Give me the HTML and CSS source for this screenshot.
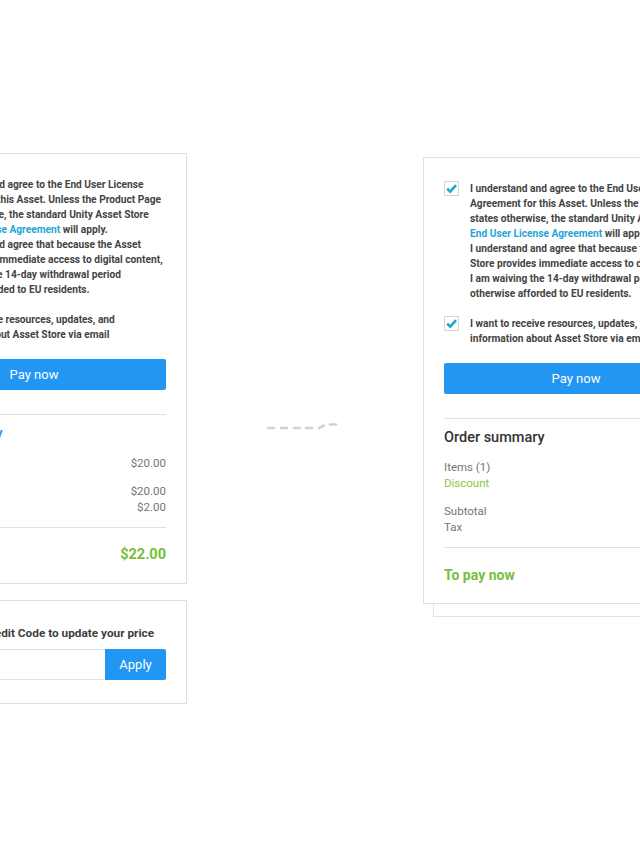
FILE: index.html
```html
<!DOCTYPE html>
<html>
<head>
<meta charset="utf-8">
<link rel="stylesheet" href="styles.css">
</head>
<body>
<div class="stage">
  <div class="col col-left">
    <div class="card">
      <div class="check-row">
        <span class="box"><svg viewBox="0 0 15 15" width="15" height="15"><path d="M3.2 7.6 L6.2 10.6 L12 4.2" fill="none" stroke="#1ea6d6" stroke-width="2.6"/></svg></span>
        <p class="legal">I understand and agree to the End User License<br>Agreement for this Asset. Unless the Product Page<br>states otherwise, the standard Unity Asset Store<br><span class="link">End User License Agreement</span> will apply.<br>I understand and agree that because the Asset<br>Store provides immediate access to digital content,<br>I am waiving the 14-day withdrawal period<br>otherwise afforded to EU residents.</p>
      </div>
      <div class="check-row second">
        <span class="box"><svg viewBox="0 0 15 15" width="15" height="15"><path d="M3.2 7.6 L6.2 10.6 L12 4.2" fill="none" stroke="#1ea6d6" stroke-width="2.6"/></svg></span>
        <p class="legal">I want to receive resources, updates, and<br>information about Asset Store via email</p>
      </div>
      <button class="pay">Pay now</button>
      <hr class="rule">
      <h2 class="summary-title blue">Order summary</h2>
      <div class="line"><span>Items (1)</span><span>$20.00</span></div>
      <div class="line gap"><span>Subtotal</span><span>$20.00</span></div>
      <div class="line"><span>Tax</span><span>$2.00</span></div>
      <hr class="rule">
      <div class="total"><span>To pay now</span><span>$22.00</span></div>
    </div>
    <div class="card credit">
      <p class="credit-title">Use Coupon or Credit Code to update your price</p>
      <div class="credit-form">
        <span class="field"></span>
        <button class="apply">Apply</button>
      </div>
    </div>
  </div>

  <div class="col col-mid">
    <svg class="arrow" width="72" height="10" viewBox="0 0 72 10">
      <g stroke="#d2d2d2" stroke-width="2.6" stroke-linecap="round" fill="none">
        <line x1="2" y1="7" x2="8" y2="7"/>
        <line x1="15" y1="7" x2="21" y2="7"/>
        <line x1="28" y1="7" x2="34" y2="7"/>
        <line x1="40" y1="7" x2="46" y2="7"/>
        <line x1="53" y1="7" x2="58" y2="4.5"/>
        <line x1="64" y1="3.5" x2="70" y2="3.5"/>
      </g>
    </svg>
  </div>

  <div class="col col-right">
    <div class="stack">
      <div class="card">
        <div class="check-row">
          <span class="box"><svg viewBox="0 0 15 15" width="15" height="15"><path d="M3.2 7.6 L6.2 10.6 L12 4.2" fill="none" stroke="#1ea6d6" stroke-width="2.6"/></svg></span>
          <p class="legal">I understand and agree to the End User License<br>Agreement for this Asset. Unless the Product Page<br>states otherwise, the standard Unity Asset Store<br><span class="link">End User License Agreement</span> will apply.<br>I understand and agree that because the Asset<br>Store provides immediate access to digital content,<br>I am waiving the 14-day withdrawal period<br>otherwise afforded to EU residents.</p>
        </div>
        <div class="check-row second">
          <span class="box"><svg viewBox="0 0 15 15" width="15" height="15"><path d="M3.2 7.6 L6.2 10.6 L12 4.2" fill="none" stroke="#1ea6d6" stroke-width="2.6"/></svg></span>
          <p class="legal">I want to receive resources, updates, and<br>information about Asset Store via email</p>
        </div>
        <button class="pay">Pay now</button>
        <hr class="rule">
        <h2 class="summary-title">Order summary</h2>
        <div class="line"><span>Items (1)</span><span>$20.00</span></div>
        <div class="line discount"><span>Discount</span><span>-$2.00</span></div>
        <div class="line gap"><span>Subtotal</span><span>$18.00</span></div>
        <div class="line"><span>Tax</span><span>$1.80</span></div>
        <hr class="rule">
        <div class="total"><span>To pay now</span><span>$19.80</span></div>
      </div>
    </div>
  </div>
</div>
</body>
</html>
```

FILE: styles.css
```css
html, body {
  margin: 0;
  padding: 0;
  background: #ffffff;
  overflow: hidden;
  width: 640px;
  height: 853px;
}

body {
  font-family: Roboto, "Liberation Sans", sans-serif;
  color: #444444;
}

.stage {
  display: flex;
  align-items: flex-start;
  margin-left: -119px;
  width: 848px;
}

.col {
  flex: none;
}

.col-left {
  width: 306px;
  padding-top: 153px;
  display: flex;
  flex-direction: column;
  gap: 16px;
}

.col-mid {
  width: 236px;
  padding-top: 421px;
  padding-left: 79px;
  box-sizing: border-box;
}

.arrow {
  display: block;
}

.col-right {
  width: 306px;
  padding-top: 157px;
}

.stack {
  position: relative;
}

.stack::before {
  content: "";
  position: absolute;
  left: 10px;
  right: -10px;
  top: 10px;
  bottom: -13px;
  border: 1px solid #e2e2e2;
  background: #ffffff;
  z-index: 0;
}

.card {
  position: relative;
  z-index: 1;
  background: #ffffff;
  border: 1px solid #e0e0e0;
  padding: 23px 20px 18px 20px;
  display: flex;
  flex-direction: column;
}

.check-row {
  display: flex;
  align-items: flex-start;
  gap: 11px;
}

.check-row.second {
  margin-top: 15px;
}

.box {
  flex: none;
  width: 15px;
  height: 15px;
  box-sizing: border-box;
  border: 1px solid #d6d6d6;
  background: #fff;
  display: flex;
}

.box svg {
  display: block;
  margin: -1px;
}

.legal {
  margin: 0;
  font-size: 10.2px;
  line-height: 15px;
  font-weight: 700;
  color: #444444;
  white-space: nowrap;
}

.link {
  color: #1ea6d6;
}

.pay {
  margin-top: 17px;
  height: 31px;
  border: 0;
  border-radius: 2px;
  background: #2196f3;
  color: #ffffff;
  font-family: Roboto, "Liberation Sans", sans-serif;
  font-size: 13px;
  padding: 0;
}

.rule {
  margin: 24px 0 0 0;
  border: 0;
  border-top: 1px solid #e2e2e2;
  height: 0;
}

.summary-title {
  margin: 9px 0 0 0;
  font-size: 14.5px;
  line-height: 20px;
  font-weight: 500;
  color: #333333;
}

.summary-title.blue {
  color: #2196f3;
}

.line {
  display: flex;
  justify-content: space-between;
  font-size: 11.5px;
  line-height: 16px;
  color: #757575;
}

.summary-title + .line {
  margin-top: 11px;
}

.line.gap {
  margin-top: 12px;
}

.line.discount {
  color: #8cc63f;
}

.line + .rule {
  margin-top: 12px;
}

.total {
  margin-top: 17px;
  display: flex;
  justify-content: space-between;
  font-size: 14px;
  line-height: 20px;
  font-weight: 700;
  color: #78be3b;
}

.total span:last-child {
  font-size: 14.5px;
}

.credit {
  padding: 23px 20px 23px 20px;
}

.credit-title {
  margin: 0;
  font-size: 11.8px;
  line-height: 18px;
  font-weight: 700;
  color: #3d3d3d;
  white-space: nowrap;
}

.credit-form {
  margin-top: 7px;
  display: flex;
  height: 31px;
}

.field {
  flex: 1;
  box-sizing: border-box;
  border: 1px solid #e2e2e2;
  border-right: 0;
}

.apply {
  flex: none;
  width: 61px;
  border: 0;
  border-radius: 0 2px 2px 0;
  background: #2196f3;
  color: #ffffff;
  font-family: Roboto, "Liberation Sans", sans-serif;
  font-size: 13px;
  padding: 0;
}
```
